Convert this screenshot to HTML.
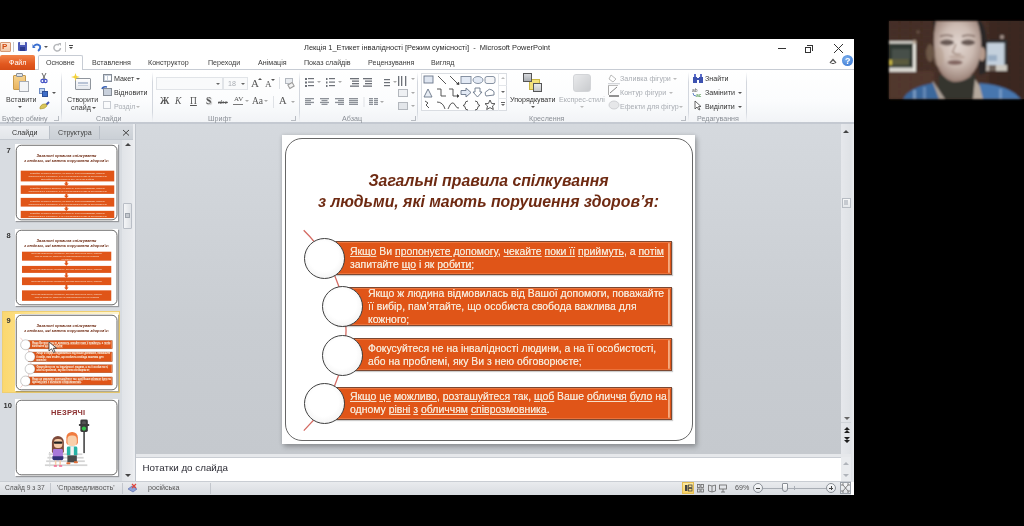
<!DOCTYPE html>
<html><head><meta charset="utf-8">
<style>
*{margin:0;padding:0;box-sizing:border-box}
html,body{width:1024px;height:526px;overflow:hidden;background:#000}
body{position:relative;font-family:"Liberation Sans",sans-serif;color:#333}
.a{position:absolute}
.t{position:absolute;white-space:nowrap;line-height:1}
.u{position:absolute;white-space:nowrap;line-height:1;font-size:8px;transform:scaleX(.89);transform-origin:0 0;color:#3b3b3b}
.g{color:#a9adb3}
.sep{position:absolute;width:1px;background:linear-gradient(rgba(205,210,218,0),#d3d7de 20%,#d3d7de 80%,rgba(205,210,218,0))}
.arr{position:absolute;width:0;height:0;border-left:2px solid transparent;border-right:2px solid transparent;border-top:2px solid #555}
svg{position:absolute;overflow:visible}
i{font-style:normal;text-decoration:underline solid rgba(248,214,180,.32);text-decoration-thickness:1px;text-underline-offset:.6px}
</style></head><body>

<div class="a" style="left:0;top:0;width:1024px;height:526px;filter:blur(0.35px)"><!-- window base -->
<div class="a" style="left:0;top:39px;width:854px;height:456px;background:#fff"></div>

<!-- ===== TITLE BAR ===== -->
<!-- PowerPoint icon -->
<div class="a" style="left:0;top:42px;width:11px;height:10px;background:linear-gradient(#fbe3d2,#f3c8a8);border:1px solid #d59a76;border-radius:1px"></div>
<div class="t" style="left:2px;top:43px;font-size:8px;font-weight:bold;color:#d24b10">P</div>
<div class="a" style="left:13px;top:42px;width:1px;height:10px;background:#c8c8c8"></div>
<!-- save -->
<div class="a" style="left:18px;top:42px;width:9px;height:9px;background:#4b59b7;border-radius:1px"></div>
<div class="a" style="left:20px;top:42px;width:5px;height:3px;background:#e9ecf6"></div>
<div class="a" style="left:20px;top:47px;width:5px;height:4px;background:#2c3a8e"></div>
<!-- undo -->
<svg style="left:32px;top:42px" width="10" height="10"><path d="M2 4 Q5 1 8 4 Q9 7 6 9" stroke="#3a6fd0" stroke-width="1.8" fill="none"/><path d="M0.5 2 L3.5 6 L0.5 6 Z" fill="#3a6fd0"/></svg>
<div class="arr" style="left:44px;top:46px"></div>
<!-- redo -->
<svg style="left:53px;top:42px" width="9" height="10"><path d="M6 3 A3.3 3.3 0 1 0 7.5 6" stroke="#b5b7ba" stroke-width="1.5" fill="none"/><path d="M5 1 L8 1 L8 4 Z" fill="#b5b7ba"/></svg>
<div class="a" style="left:65px;top:42px;width:1px;height:10px;background:#c8c8c8"></div>
<div class="a" style="left:69px;top:45px;width:4px;height:1px;background:#444"></div>
<div class="arr" style="left:69px;top:47px;border-top-color:#444"></div>

<div class="t" style="left:304px;top:44px;font-size:8px;transform:scaleX(.93);transform-origin:0 0;color:#2b2b2b">Лекція 1_Етикет інвалідності [Режим сумісності]&nbsp; - &nbsp;Microsoft PowerPoint</div>

<!-- window controls -->
<div class="a" style="left:778px;top:48px;width:8px;height:1px;background:#333"></div>
<div class="a" style="left:807px;top:45px;width:6px;height:6px;border-top:1px solid #333;border-right:1px solid #333"></div>
<div class="a" style="left:805px;top:47px;width:6px;height:6px;border:1px solid #333;background:#fff"></div>
<svg style="left:834px;top:44px" width="9" height="9"><path d="M0 0 L9 9 M9 0 L0 9" stroke="#333" stroke-width="1"/></svg>

<!-- ===== TABS ===== -->
<div class="a" style="left:0;top:69px;width:854px;height:1px;background:#c7ccd4"></div>
<div class="a" style="left:0;top:55px;width:35px;height:15px;background:linear-gradient(#f3844a,#e2581f 60%,#d54c17);border-radius:2px 2px 0 0"></div>
<div class="u" style="left:9px;top:59px;color:#fff">Файл</div>
<div class="a" style="left:38px;top:55px;width:45px;height:15px;background:#fff;border:1px solid #c7ccd4;border-bottom:none;border-radius:2px 2px 0 0"></div>
<div class="u" style="left:46px;top:59px">Основне</div>
<div class="u" style="left:92px;top:59px">Вставлення</div>
<div class="u" style="left:148px;top:59px">Конструктор</div>
<div class="u" style="left:208px;top:59px">Переходи</div>
<div class="u" style="left:258px;top:59px">Анімація</div>
<div class="u" style="left:304px;top:59px">Показ слайдів</div>
<div class="u" style="left:368px;top:59px">Рецензування</div>
<div class="u" style="left:431px;top:59px">Вигляд</div>
<!-- minimize ribbon / help -->
<svg style="left:829px;top:58px" width="8" height="6"><path d="M1 5 L4 1.5 L7 5" stroke="#555" stroke-width="1.2" fill="none"/><path d="M2.5 5.5 L5.5 5.5" stroke="#555" stroke-width="1"/></svg>
<div class="a" style="left:842px;top:55px;width:11px;height:11px;border-radius:50%;background:radial-gradient(circle at 40% 35%,#7fb2ee,#2f6fcf)"></div>
<div class="t" style="left:845px;top:57px;font-size:9px;font-weight:bold;color:#fff">?</div>

<!-- ===== RIBBON ===== -->
<div class="a" style="left:0;top:70px;width:854px;height:53px;background:linear-gradient(#ffffff,#fbfcfd 60%,#f1f3f6)"></div>
<div class="a" style="left:0;top:122px;width:854px;height:2px;background:#c4c9d1"></div>

<!-- group separators -->
<div class="sep" style="left:61px;top:72px;height:50px"></div>
<div class="sep" style="left:152px;top:72px;height:50px"></div>
<div class="sep" style="left:299px;top:72px;height:50px"></div>
<div class="sep" style="left:417px;top:72px;height:50px"></div>
<div class="sep" style="left:688px;top:72px;height:50px"></div>
<div class="sep" style="left:746px;top:72px;height:50px"></div>

<!-- group labels -->
<div class="u" style="left:2px;top:115px;color:#8a8f96">Буфер обміну</div>
<div class="u" style="left:96px;top:115px;color:#8a8f96">Слайди</div>
<div class="u" style="left:208px;top:115px;color:#8a8f96">Шрифт</div>
<div class="u" style="left:342px;top:115px;color:#8a8f96">Абзац</div>
<div class="u" style="left:529px;top:115px;color:#8a8f96">Креслення</div>
<div class="u" style="left:697px;top:115px;color:#8a8f96">Редагування</div>
<!-- launchers -->
<div class="a" style="left:54px;top:116px;width:5px;height:5px;border:1px solid #b8bcc2;border-left:none;border-top:none"></div>
<div class="a" style="left:291px;top:116px;width:5px;height:5px;border:1px solid #b8bcc2;border-left:none;border-top:none"></div>
<div class="a" style="left:411px;top:116px;width:5px;height:5px;border:1px solid #b8bcc2;border-left:none;border-top:none"></div>
<div class="a" style="left:681px;top:116px;width:5px;height:5px;border:1px solid #b8bcc2;border-left:none;border-top:none"></div>

<!-- Clipboard -->
<div class="a" style="left:13px;top:75px;width:13px;height:15px;background:linear-gradient(#f7d38f,#e9b45e);border:1px solid #c79a4c;border-radius:1px"></div>
<div class="a" style="left:16px;top:73px;width:7px;height:4px;background:#dfe3e8;border:1px solid #8b9096;border-radius:1px"></div>
<div class="a" style="left:19px;top:81px;width:10px;height:11px;background:#f4f5f7;border:1px solid #a9adb4"></div>
<div class="u" style="left:6px;top:96px">Вставити</div>
<div class="arr" style="left:18px;top:106px"></div>
<svg style="left:40px;top:73px" width="8" height="10"><path d="M2 0 L5 6 M6 0 L3 6" stroke="#666" stroke-width="1"/><circle cx="2.5" cy="8" r="1.6" stroke="#4654c6" stroke-width="1.2" fill="none"/><circle cx="5.5" cy="8" r="1.6" stroke="#4654c6" stroke-width="1.2" fill="none"/></svg>
<div class="a" style="left:39px;top:88px;width:6px;height:6px;background:#c4d6f1;border:1px solid #6d8cc4"></div>
<div class="a" style="left:42px;top:91px;width:6px;height:6px;background:#3f6fc9;border:1px solid #2d4f96"></div>
<div class="arr" style="left:52px;top:92px"></div>
<svg style="left:39px;top:101px" width="11" height="9"><path d="M7 4 L10 1" stroke="#4757b5" stroke-width="2"/><path d="M1 6 Q3 2 7 3 L8 5 Q6 8 1 8 Z" fill="#d8c45a" stroke="#a89530" stroke-width=".6"/></svg>

<!-- Slides group -->
<div class="a" style="left:75px;top:78px;width:16px;height:12px;background:linear-gradient(#fdfdfe,#e6e9ee);border:1px solid #8f959d;border-radius:1px"></div>
<div class="a" style="left:78px;top:82px;width:10px;height:2px;background:#b9c4d6"></div>
<div class="a" style="left:78px;top:85px;width:10px;height:1px;background:#c8d0dc"></div>
<svg style="left:71px;top:73px" width="9" height="8"><path d="M4.5 0 L5.5 3 L9 4 L5.5 5 L4.5 8 L3.5 5 L0 4 L3.5 3 Z" fill="#f4d23a"/></svg>
<div class="u" style="left:67px;top:96px">Створити</div>
<div class="u" style="left:71px;top:104px">слайд</div>
<div class="arr" style="left:92px;top:107px"></div>

<div class="a" style="left:103px;top:74px;width:9px;height:8px;background:#c8d0dc;border:1px solid #858c96"></div>
<div class="a" style="left:105px;top:76px;width:2px;height:4px;background:#fff"></div>
<div class="a" style="left:108px;top:76px;width:3px;height:4px;background:#fff"></div>
<div class="u" style="left:114px;top:75px;color:#333">Макет</div>
<div class="arr" style="left:136px;top:78px"></div>
<div class="a" style="left:103px;top:88px;width:9px;height:8px;background:#c8d0dc;border:1px solid #858c96"></div>
<svg style="left:101px;top:85px" width="7" height="5"><path d="M1 4 Q2 1 6 2" stroke="#3b63b5" stroke-width="1.5" fill="none"/></svg>
<div class="u" style="left:114px;top:89px;color:#333">Відновити</div>
<div class="a" style="left:103px;top:101px;width:8px;height:8px;border:1px solid #c9cdd3"></div>
<div class="u g" style="left:114px;top:103px">Розділ</div>
<div class="arr" style="left:136px;top:106px;border-top-color:#bbb"></div>

<!-- Font group -->
<div class="a" style="left:156px;top:77px;width:67px;height:13px;background:#f9fafb;border:1px solid #e1e4e8"></div>
<div class="arr" style="left:216px;top:83px;border-top-color:#666"></div>
<div class="a" style="left:223px;top:77px;width:25px;height:13px;background:#f9fafb;border:1px solid #e1e4e8"></div>
<div class="u g" style="left:228px;top:80px">18</div>
<div class="arr" style="left:241px;top:83px;border-top-color:#666"></div>
<div class="t" style="left:251px;top:78px;font-family:'Liberation Serif';font-size:11px;color:#555">A</div>
<div class="arr" style="left:258px;top:78px;border-top:none;border-bottom:2px solid #555"></div>
<div class="t" style="left:265px;top:80px;font-family:'Liberation Serif';font-size:9px;color:#555">A</div>
<div class="arr" style="left:271px;top:79px"></div>
<div class="a" style="left:279px;top:77px;width:1px;height:12px;background:#dfe2e6"></div>
<div class="a" style="left:285px;top:78px;width:8px;height:6px;background:#e9ecf0;border:1px solid #b3b8bf"></div>
<div class="a" style="left:288px;top:83px;width:6px;height:5px;background:#f3f3f3;border:1px solid #999;transform:rotate(-30deg)"></div>

<div class="t" style="left:160px;top:97px;font-family:'Liberation Serif';font-weight:bold;font-size:9.5px;color:#555">Ж</div>
<div class="t" style="left:175px;top:97px;font-family:'Liberation Serif';font-style:italic;font-size:9.5px;color:#555">К</div>
<div class="t" style="left:190px;top:97px;font-family:'Liberation Serif';font-size:9.5px;color:#555;text-decoration:underline">П</div>
<div class="t" style="left:206px;top:97px;font-family:'Liberation Serif';font-weight:bold;font-size:9.5px;color:#555;text-shadow:1px 1px 1px #aaa">S</div>
<div class="t" style="left:218px;top:99px;font-family:'Liberation Serif';font-size:7px;color:#555;text-decoration:line-through">abe</div>
<div class="t" style="left:234px;top:96px;font-family:'Liberation Serif';font-size:7px;color:#555">AV</div>
<div class="a" style="left:233px;top:104px;width:10px;height:1px;background:#777"></div>
<div class="arr" style="left:245px;top:100px;border-top-color:#aaa"></div>
<div class="t" style="left:252px;top:97px;font-family:'Liberation Serif';font-size:9.5px;color:#555">Aa</div>
<div class="arr" style="left:264px;top:100px;border-top-color:#aaa"></div>
<div class="a" style="left:273px;top:96px;width:1px;height:12px;background:#dfe2e6"></div>
<div class="t" style="left:279px;top:96px;font-family:'Liberation Serif';font-size:10.5px;color:#555">A</div>
<div class="arr" style="left:291px;top:101px;border-top-color:#aaa"></div>

<!-- Paragraph group -->
<svg style="left:305px;top:78px" width="120" height="30">
 <g fill="#6d7178">
  <rect x="0" y="0" width="2" height="2"/><rect x="3" y="0" width="6" height="1.2"/>
  <rect x="0" y="3.5" width="2" height="2"/><rect x="3" y="3.5" width="6" height="1.2"/>
  <rect x="0" y="7" width="2" height="2"/><rect x="3" y="7" width="6" height="1.2"/>
  <rect x="21" y="0" width="1.5" height="2"/><rect x="24" y="0" width="6" height="1.2"/>
  <rect x="21" y="3.5" width="1.5" height="2"/><rect x="24" y="3.5" width="6" height="1.2"/>
  <rect x="21" y="7" width="1.5" height="2"/><rect x="24" y="7" width="6" height="1.2"/>
  <rect x="45" y="0" width="9" height="1.3"/><rect x="47" y="2.5" width="7" height="1.3"/><rect x="47" y="5" width="7" height="1.3"/><rect x="45" y="7.5" width="9" height="1.3"/>
  <rect x="58" y="0" width="9" height="1.3"/><rect x="60" y="2.5" width="7" height="1.3"/><rect x="60" y="5" width="7" height="1.3"/><rect x="58" y="7.5" width="9" height="1.3"/>
  <rect x="79" y="1" width="6" height="1.2"/><rect x="79" y="4" width="6" height="1.2"/><rect x="79" y="7" width="6" height="1.2"/>
  <rect x="93" y="-2" width="1.3" height="10"/><rect x="96" y="-2" width="1.3" height="10"/><rect x="100" y="-2" width="1.3" height="10"/>
 </g>
 <g fill="#8d9198">
<rect x="0" y="20.0" width="9" height="1.3"/>
<rect x="15" y="20.0" width="9" height="1.3"/>
<rect x="30" y="20.0" width="9" height="1.3"/>
<rect x="44" y="20.0" width="9" height="1.3"/>
<rect x="64" y="20.0" width="4" height="1.3"/><rect x="69" y="20.0" width="4" height="1.3"/>
<rect x="0" y="21.9" width="6" height="1.3"/>
<rect x="16.5" y="21.9" width="6" height="1.3"/>
<rect x="33" y="21.9" width="6" height="1.3"/>
<rect x="44" y="21.9" width="9" height="1.3"/>
<rect x="64" y="21.9" width="4" height="1.3"/><rect x="69" y="21.9" width="4" height="1.3"/>
<rect x="0" y="23.8" width="9" height="1.3"/>
<rect x="15" y="23.8" width="9" height="1.3"/>
<rect x="30" y="23.8" width="9" height="1.3"/>
<rect x="44" y="23.8" width="9" height="1.3"/>
<rect x="64" y="23.8" width="4" height="1.3"/><rect x="69" y="23.8" width="4" height="1.3"/>
<rect x="0" y="25.7" width="6" height="1.3"/>
<rect x="16.5" y="25.7" width="6" height="1.3"/>
<rect x="33" y="25.7" width="6" height="1.3"/>
<rect x="44" y="25.7" width="9" height="1.3"/>
<rect x="64" y="25.7" width="4" height="1.3"/><rect x="69" y="25.7" width="4" height="1.3"/>
 </g>
 <rect x="58.5" y="19" width="1" height="10" fill="#dfe2e6"/>
</svg>
<div class="arr" style="left:317px;top:81px;border-top-color:#aaa"></div>
<div class="arr" style="left:338px;top:81px;border-top-color:#aaa"></div>
<div class="arr" style="left:393px;top:81px;border-top-color:#aaa"></div>
<div class="arr" style="left:380px;top:101px;border-top-color:#aaa"></div>
<div class="arr" style="left:411px;top:78px;border-top-color:#aaa"></div>
<div class="a" style="left:398px;top:89px;width:10px;height:8px;border:1px solid #b3b7bd;background:#eef0f3"></div>
<div class="arr" style="left:411px;top:92px;border-top-color:#aaa"></div>
<div class="a" style="left:398px;top:102px;width:10px;height:8px;border:1px solid #b3b7bd;background:#e3e6ea"></div>
<div class="arr" style="left:411px;top:105px;border-top-color:#aaa"></div>

<!-- Shapes gallery -->
<div class="a" style="left:421px;top:73px;width:86px;height:38px;background:#fff;border:1px solid #dadde2"></div>
<div class="a" style="left:498px;top:73px;width:1px;height:38px;background:#e3e6ea"></div>
<div class="a" style="left:499px;top:85px;width:8px;height:1px;background:#e3e6ea"></div>
<div class="a" style="left:499px;top:98px;width:8px;height:1px;background:#e3e6ea"></div>
<div class="arr" style="left:501px;top:77px;border-top:none;border-bottom:2px solid #bbb"></div>
<div class="arr" style="left:501px;top:91px;border-top-color:#666"></div>
<div class="arr" style="left:501px;top:104px;border-top-color:#666"></div>
<div class="a" style="left:501px;top:102px;width:4px;height:1px;background:#666"></div>
<svg style="left:423px;top:75px" width="76" height="36">
 <g stroke="#444" stroke-width=".9" fill="none">
  <rect x="1" y="1" width="9" height="7" fill="#dfe6f1" stroke="#6a7689"/>
  <path d="M15 1 L23 9"/>
  <path d="M27 1 L35 9"/><path d="M33.5 9 L36 9.5 L35.5 7" fill="#333"/>
  <rect x="38" y="1.5" width="10" height="7" fill="#e3eaf5" stroke="#7b8799"/>
  <ellipse cx="55" cy="5" rx="5" ry="3.5" fill="#e3eaf5" stroke="#7b8799"/>
  <rect x="62" y="1.5" width="10" height="7" rx="2" fill="#f4f5f7" stroke="#7b8799"/>
  <path d="M1 22 L5 14 L9 22 Z" fill="#e8edf4" stroke="#6a7689"/>
  <path d="M14 14 L18 14 L18 21 L23 21"/>
  <path d="M26 14 L30 14 L30 21 L35 21"/><path d="M34 19.5 L36 21 L34 22.5" fill="#333"/>
  <path d="M38 15.5 L43 15.5 L43 13 L48 17.5 L43 22 L43 19.5 L38 19.5 Z" fill="#e3eaf5" stroke="#6a7689"/>
  <path d="M52 13 L57 13 L57 17 L59 17 L54.5 22 L50 17 L52 17 Z" fill="#fff" stroke="#6a7689"/>
  <path d="M63 21 Q61 17 64 16 Q66 13 69 15 Q72 16 71 20 Z" fill="#fff" stroke="#6a7689"/>
  <path d="M2 26 L5 28 L3 30 L6 33"/>
  <path d="M14 27 Q20 27 22 34"/>
  <path d="M25 34 Q29 24 32 30 Q34 34 36 33"/>
  <path d="M45 26 Q42 26 42 29 Q42 30 40 30.5 Q42 31 42 32 Q42 35 45 35"/>
  <path d="M52 26 Q55 26 55 29 Q55 30 57 30.5 Q55 31 55 32 Q55 35 52 35"/>
  <path d="M67 25 L68.6 28.5 L72 28.7 L69.5 31 L70.3 34.5 L67 32.6 L63.7 34.5 L64.5 31 L62 28.7 L65.4 28.5 Z"/>
 </g>
</svg>

<!-- Arrange / Express styles -->
<div class="a" style="left:529px;top:79px;width:11px;height:11px;background:#f3e07a;border:1px solid #c9b544"></div>
<div class="a" style="left:523px;top:73px;width:9px;height:9px;background:linear-gradient(#d8dadd,#a9adb2);border:1px solid #555"></div>
<div class="a" style="left:533px;top:83px;width:9px;height:9px;background:linear-gradient(#e8e9eb,#c4c7cb);border:1px solid #555"></div>
<div class="u" style="left:510px;top:96px;color:#333">Упорядкувати</div>
<div class="arr" style="left:531px;top:106px"></div>
<div class="a" style="left:573px;top:74px;width:18px;height:18px;border-radius:3px;background:linear-gradient(135deg,#e9eaec,#c9cbce);border:1px solid #d3d5d8"></div>
<div class="u g" style="left:559px;top:96px">Експрес-стилі</div>
<div class="arr" style="left:580px;top:106px;border-top-color:#bbb"></div>
<svg style="left:608px;top:73px" width="12" height="38">
 <path d="M3 2 L8 6 L5 9 L1 6 Z" fill="none" stroke="#aaa" stroke-width=".8"/><rect x="0" y="10" width="12" height="1.3" fill="#d3d6da"/>
 <path d="M1 23 L11 23" stroke="#6e6e6e" stroke-width="1.5"/><path d="M2 20 L9 14" stroke="#888" stroke-width="1"/><rect x="0" y="12" width="1" height="10" fill="#aaa"/><rect x="0" y="12" width="10" height="1" fill="#bbb"/>
 <ellipse cx="6" cy="32" rx="5" ry="4" fill="#e6e7e9" stroke="#c6c8cb" stroke-width=".8"/>
</svg>
<div class="u g" style="left:620px;top:75px">Заливка фігури</div>
<div class="arr" style="left:673px;top:78px;border-top-color:#bbb"></div>
<div class="u g" style="left:620px;top:89px">Контур фігури</div>
<div class="arr" style="left:669px;top:92px;border-top-color:#bbb"></div>
<div class="u g" style="left:620px;top:103px">Ефекти для фігур</div>
<div class="arr" style="left:679px;top:106px;border-top-color:#bbb"></div>

<!-- Editing group -->
<svg style="left:693px;top:74px" width="11" height="9"><rect x="0" y="3" width="4" height="6" fill="#3d52b0"/><rect x="6" y="3" width="4" height="6" fill="#3d52b0"/><rect x="3" y="4" width="4" height="2" fill="#3d52b0"/><rect x="1" y="0" width="2" height="3" fill="#5a6cc8"/><rect x="7" y="0" width="2" height="3" fill="#5a6cc8"/></svg>
<div class="u" style="left:705px;top:75px;color:#333">Знайти</div>
<svg style="left:692px;top:87px" width="12" height="10"><text x="0" y="5" font-size="5" fill="#555" font-family="Liberation Sans">ab</text><text x="4" y="10" font-size="5" fill="#3b8a3b" font-family="Liberation Sans">ac</text><path d="M1 6 Q1 9 4 9" stroke="#3b63b5" stroke-width=".8" fill="none"/></svg>
<div class="u" style="left:705px;top:89px;color:#333">Замінити</div>
<div class="arr" style="left:738px;top:92px"></div>
<svg style="left:694px;top:101px" width="9" height="10"><path d="M1 0 L1 8 L3 6 L5 9 L6 8.5 L4.5 5.5 L7 5.5 Z" fill="#fff" stroke="#444" stroke-width=".8"/></svg>
<div class="u" style="left:705px;top:103px;color:#333">Виділити</div>
<div class="arr" style="left:738px;top:106px"></div>

<!-- ===== LEFT PANE ===== -->
<div class="a" style="left:0;top:124px;width:137px;height:358px;background:#d8dce1"></div>
<!-- pane tabs -->
<div class="a" style="left:0;top:126px;width:133px;height:13px;background:linear-gradient(#d5d9de,#cbd0d6)"></div>
<div class="a" style="left:0;top:126px;width:49px;height:13px;background:linear-gradient(#eceef1,#e2e5e9)"></div>
<div class="u" style="left:12px;top:128.5px;color:#333">Слайди</div>
<div class="a" style="left:49px;top:126px;width:1px;height:13px;background:#b9bfc7"></div>
<div class="u" style="left:58px;top:128.5px;color:#444">Структура</div>
<div class="a" style="left:99px;top:126px;width:1px;height:13px;background:#b9bfc7"></div>
<div class="a" style="left:0;top:139px;width:133px;height:1px;background:#c3c8cf"></div>
<svg style="left:123px;top:130px" width="6" height="5.5"><path d="M0 0 L6 5.5 M6 0 L0 5.5" stroke="#444" stroke-width="1"/></svg>
<div class="a" style="left:133px;top:124px;width:2px;height:358px;background:#eceef1"></div>
<div class="a" style="left:135px;top:124px;width:2px;height:358px;background:#d5d9de"></div>
<!-- pane scrollbar -->
<div class="a" style="left:122px;top:140px;width:11px;height:342px;background:linear-gradient(90deg,#e1e4e8,#e9ebee)"></div>
<div class="arr" style="left:124.5px;top:143px;border-left-width:3px;border-right-width:3px;border-top:none;border-bottom:3px solid #444"></div>
<div class="a" style="left:123px;top:203px;width:9px;height:26px;background:linear-gradient(90deg,#f4f5f7,#dfe2e6);border:1px solid #b9bec6;border-radius:1px"></div>
<div class="a" style="left:125px;top:213px;width:5px;height:5px;background:#c4c8ce;border:1px solid #9da3ab"></div>
<div class="arr" style="left:124.5px;top:474px;border-left-width:3px;border-right-width:3px;border-top:3px solid #444"></div>

<!-- selected highlight -->
<div class="a" style="left:2px;top:311px;width:118px;height:82px;background:linear-gradient(90deg,#fbd86f,#fde7a0 35%,#fdf1c6 80%,#fdf4d2);border:1px solid #efcf72"></div>

<!-- numbers -->
<div class="t" style="left:6.5px;top:146.5px;font-size:7.5px;font-weight:bold;color:#333">7</div>
<div class="t" style="left:6.5px;top:231.5px;font-size:7.5px;font-weight:bold;color:#333">8</div>
<div class="t" style="left:6.5px;top:316.5px;font-size:7.5px;font-weight:bold;color:#333">9</div>
<div class="t" style="left:3.5px;top:401.5px;font-size:7.5px;font-weight:bold;color:#333">10</div>
<div class="a" style="left:14.5px;top:143.5px;width:103.0px;height:77.06295399515739px;background:#fff;box-shadow:1px 1px 1px rgba(0,0,0,.3)"></div><div class="a" style="left:14.5px;top:143.5px;width:413px;height:309px;transform:scale(0.24939467312348668);transform-origin:0 0;overflow:hidden"><div class="a" style="left:3.3px;top:3.3px;width:407.5px;height:302.5px;border:4px solid #666;border-radius:22px"></div>
<div class="t" style="left:0;top:34.5px;width:413px;text-align:center;font-size:15.8px;font-weight:bold;font-style:italic;color:#6e2a12;line-height:21.5px">Загальні правила спілкування<br>з людьми, які мають порушення здоров’я:</div>
<div class="a" style="left:23px;top:107px;width:375px;height:43px;background:#e05518"></div>
<div class="t" style="left:23px;top:110.5px;width:375px;text-align:center;font-size:9.5px;line-height:12px;color:#f6e4d2">Уникайте жестів та звертань, які можуть бути образливими, говоріть<br>безпосередньо з людиною, а не з її супроводжуючим чи перекладачем<br>звертайтеся до людини на ім’я, якщо ви знайомі</div>
<div class="a" style="left:23px;top:166px;width:375px;height:34px;background:#e05518"></div>
<div class="t" style="left:23px;top:171.0px;width:375px;text-align:center;font-size:9.5px;line-height:12px;color:#f6e4d2">Уникайте жестів та звертань, які можуть бути образливими, говоріть<br>безпосередньо з людиною, а не з її супроводжуючим чи перекладачем</div>
<div class="a" style="left:23px;top:216px;width:375px;height:35px;background:#e05518"></div>
<div class="t" style="left:23px;top:221.5px;width:375px;text-align:center;font-size:9.5px;line-height:12px;color:#f6e4d2">Уникайте жестів та звертань, які можуть бути образливими, говоріть<br>безпосередньо з людиною, а не з її супроводжуючим чи перекладачем</div>
<div class="a" style="left:23px;top:268px;width:375px;height:29px;background:#e05518"></div>
<div class="t" style="left:23px;top:270.5px;width:375px;text-align:center;font-size:9.5px;line-height:12px;color:#f6e4d2">Уникайте жестів та звертань, які можуть бути образливими, говоріть<br>безпосередньо з людиною, а не з її супроводжуючим чи перекладачем</div>
<svg style="left:196px;top:150px" width="20" height="18"><path d="M6 0 L14 0 L14 8 L20 8 L10 18 L0 8 L6 8 Z" fill="#e05518"/></svg>
<svg style="left:196px;top:200px" width="20" height="18"><path d="M6 0 L14 0 L14 8 L20 8 L10 18 L0 8 L6 8 Z" fill="#e05518"/></svg>
<svg style="left:196px;top:251px" width="20" height="18"><path d="M6 0 L14 0 L14 8 L20 8 L10 18 L0 8 L6 8 Z" fill="#e05518"/></svg></div>
<div class="a" style="left:14.5px;top:228.9px;width:103.0px;height:77.06295399515739px;background:#fff;box-shadow:1px 1px 1px rgba(0,0,0,.3)"></div><div class="a" style="left:14.5px;top:228.9px;width:413px;height:309px;transform:scale(0.24939467312348668);transform-origin:0 0;overflow:hidden"><div class="a" style="left:3.3px;top:3.3px;width:407.5px;height:302.5px;border:4px solid #666;border-radius:22px"></div>
<div class="t" style="left:0;top:34.5px;width:413px;text-align:center;font-size:15.8px;font-weight:bold;font-style:italic;color:#6e2a12;line-height:21.5px">Загальні правила спілкування<br>з людьми, які мають порушення здоров’я:</div>
<div class="a" style="left:28px;top:91px;width:358px;height:36px;background:#e05518"></div>
<div class="t" style="left:28px;top:92.5px;width:358px;text-align:center;font-size:9px;line-height:11px;color:#f6e4d2">Якщо Ви спілкуєтеся з людиною, яка має порушення слуху, говоріть<br>чітко та повільно, дивіться на співрозмовника під час розмови<br>не кричіть</div>
<div class="a" style="left:28px;top:148px;width:358px;height:28px;background:#e05518"></div>
<div class="t" style="left:28px;top:156.5px;width:358px;text-align:center;font-size:9px;line-height:11px;color:#f6e4d2">Якщо Ви спілкуєтеся з людиною, яка має порушення слуху, говоріть</div>
<div class="a" style="left:28px;top:194px;width:358px;height:31px;background:#e05518"></div>
<div class="t" style="left:28px;top:204.0px;width:358px;text-align:center;font-size:9px;line-height:11px;color:#f6e4d2">Якщо Ви спілкуєтеся з людиною, яка має порушення слуху, говоріть</div>
<div class="a" style="left:28px;top:246px;width:358px;height:42px;background:#e05518"></div>
<div class="t" style="left:28px;top:256.0px;width:358px;text-align:center;font-size:9px;line-height:11px;color:#f6e4d2">Якщо Ви спілкуєтеся з людиною, яка має порушення слуху, говоріть<br>чітко та повільно, дивіться на співрозмовника під час розмови</div>
<svg style="left:197px;top:127px" width="18" height="20"><path d="M5 0 L13 0 L13 10 L18 10 L9 20 L0 10 L5 10 Z" fill="#e05518"/></svg>
<svg style="left:197px;top:176px" width="18" height="20"><path d="M5 0 L13 0 L13 10 L18 10 L9 20 L0 10 L5 10 Z" fill="#e05518"/></svg>
<svg style="left:197px;top:225px" width="18" height="20"><path d="M5 0 L13 0 L13 10 L18 10 L9 20 L0 10 L5 10 Z" fill="#e05518"/></svg></div>
<div class="a" style="left:14.5px;top:313.6px;width:103.0px;height:77.06295399515739px;background:#fff;box-shadow:1px 1px 1px rgba(0,0,0,.3)"></div><div class="a" style="left:14.5px;top:313.6px;width:413px;height:309px;transform:scale(0.24939467312348668);transform-origin:0 0;overflow:hidden"><div class="a" style="left:3.3px;top:3.3px;width:407.5px;height:302.5px;border:4px solid #666;border-radius:22px"></div>
<div class="t" style="left:0;top:34.5px;width:413px;text-align:center;font-size:15.8px;font-weight:bold;font-style:italic;color:#6e2a12;line-height:21.5px">Загальні правила спілкування<br>з людьми, які мають порушення здоров’я:</div>
<svg style="left:0;top:0" width="413" height="309"><path d="M21.7 95.3 A139.7 139.7 0 0 1 21.8 295.6" stroke="#d46a62" stroke-width="1.3" fill="none"/></svg>
<div class="a" style="left:38px;top:106px;width:352px;height:33.5px;background:#e05518;border:1px solid rgba(105,70,55,.85);box-shadow:inset 0 1px 0 rgba(250,150,100,.55),inset 0 -1px 0 rgba(250,150,100,.45),1px 1px 1px rgba(0,0,0,.2)"></div>
<div class="a" style="left:386px;top:108px;width:2.2px;height:29.5px;background:linear-gradient(90deg,#f7b088,#f39a66);border-radius:1px"></div>
<div class="a" style="left:54px;top:151.7px;width:336px;height:39.8px;background:#e05518;border:1px solid rgba(105,70,55,.85);box-shadow:inset 0 1px 0 rgba(250,150,100,.55),inset 0 -1px 0 rgba(250,150,100,.45),1px 1px 1px rgba(0,0,0,.2)"></div>
<div class="a" style="left:386px;top:153.7px;width:2.2px;height:35.8px;background:linear-gradient(90deg,#f7b088,#f39a66);border-radius:1px"></div>
<div class="a" style="left:54px;top:203.2px;width:336px;height:33px;background:#e05518;border:1px solid rgba(105,70,55,.85);box-shadow:inset 0 1px 0 rgba(250,150,100,.55),inset 0 -1px 0 rgba(250,150,100,.45),1px 1px 1px rgba(0,0,0,.2)"></div>
<div class="a" style="left:386px;top:205.2px;width:2.2px;height:29px;background:linear-gradient(90deg,#f7b088,#f39a66);border-radius:1px"></div>
<div class="a" style="left:38px;top:252px;width:352px;height:33.2px;background:#e05518;border:1px solid rgba(105,70,55,.85);box-shadow:inset 0 1px 0 rgba(250,150,100,.55),inset 0 -1px 0 rgba(250,150,100,.45),1px 1px 1px rgba(0,0,0,.2)"></div>
<div class="a" style="left:386px;top:254px;width:2.2px;height:29.200000000000003px;background:linear-gradient(90deg,#f7b088,#f39a66);border-radius:1px"></div>
<div class="a" style="left:21.5px;top:102.5px;width:41px;height:41px;border-radius:50%;background:radial-gradient(circle at 48% 45%,#fff 50%,#f2f2f2 80%,#dcdcdc);border:1.8px solid #404040"></div>
<div class="a" style="left:40px;top:151px;width:41px;height:41px;border-radius:50%;background:radial-gradient(circle at 48% 45%,#fff 50%,#f2f2f2 80%,#dcdcdc);border:1.8px solid #404040"></div>
<div class="a" style="left:40px;top:199.5px;width:41px;height:41px;border-radius:50%;background:radial-gradient(circle at 48% 45%,#fff 50%,#f2f2f2 80%,#dcdcdc);border:1.8px solid #404040"></div>
<div class="a" style="left:21.5px;top:247.5px;width:41px;height:41px;border-radius:50%;background:radial-gradient(circle at 48% 45%,#fff 50%,#f2f2f2 80%,#dcdcdc);border:1.8px solid #404040"></div>
<div class="t" style="left:68px;top:111px;font-size:10.45px;color:#f6e4d2;text-shadow:0 0 .1px #f6e4d2;line-height:12.8px"><i>Якщо</i> Ви <i>пропонуєте допомогу</i>, <i>чекайте</i> <i>поки її</i> <i>приймуть</i>, а <i>потім</i><br>запитайте <i>що</i> і як <i>робити</i>;</div>
<div class="t" style="left:86px;top:152.2px;font-size:10.45px;color:#f6e4d2;text-shadow:0 0 .1px #f6e4d2;line-height:13.1px">Якщо ж людина відмовилась від Вашої допомоги, поважайте<br>її вибір, пам’ятайте, що особиста свобода важлива для<br>кожного;</div>
<div class="t" style="left:86px;top:208px;font-size:10.45px;color:#f6e4d2;text-shadow:0 0 .1px #f6e4d2;line-height:12.6px">Фокусуйтеся не на інвалідності людини, а на її особистості,<br>або на проблемі, яку Ви з нею обговорюєте;</div>
<div class="t" style="left:68px;top:255.3px;font-size:10.45px;color:#f6e4d2;text-shadow:0 0 .1px #f6e4d2;line-height:13.1px"><i>Якщо</i> <i>це</i> <i>можливо</i>, <i>розташуйтеся</i> так, <i>щоб</i> Ваше <i>обличчя</i> <i>було</i> на<br>одному <i>рівні</i> <i>з</i> <i>обличчям</i> <i>співрозмовника</i>.</div></div>
<div class="a" style="left:14.5px;top:398.9px;width:103.0px;height:77.06295399515739px;background:#fff;box-shadow:1px 1px 1px rgba(0,0,0,.3)"></div><div class="a" style="left:14.5px;top:398.9px;width:413px;height:309px;transform:scale(0.24939467312348668);transform-origin:0 0;overflow:hidden"><div class="a" style="left:3.3px;top:3.3px;width:407.5px;height:302.5px;border:4px solid #666;border-radius:22px"></div>
<div class="t" style="left:0;top:41px;width:413px;text-align:center;font-size:30px;font-weight:bold;color:#8c2f2f;letter-spacing:1px;padding-left:14px">НЕЗРЯЧІ</div>
<div class="a" style="left:135px;top:218px;width:135px;height:7px;background:#d4d4d4"></div>
<div class="a" style="left:130px;top:232px;width:145px;height:7px;background:#d4d4d4"></div>
<div class="a" style="left:125px;top:246px;width:155px;height:7px;background:#d4d4d4"></div>
<div class="a" style="left:120px;top:262px;width:170px;height:7px;background:#d4d4d4"></div>
<div class="a" style="left:262px;top:82px;width:30px;height:50px;background:#3a3a3a;border-radius:6px"></div>
<div class="a" style="left:268px;top:88px;width:17px;height:17px;background:#555;border-radius:50%"></div>
<div class="a" style="left:268px;top:110px;width:17px;height:17px;background:#35c24a;border-radius:50%"></div>
<div class="a" style="left:274px;top:132px;width:6px;height:85px;background:#3a3a3a"></div>
<div class="a" style="left:256px;top:100px;width:42px;height:8px;background:#3a3a3a;border-radius:3px"></div>
<div class="a" style="left:148px;top:148px;width:48px;height:70px;background:#7e4a3a;border-radius:24px 24px 8px 8px"></div>
<div class="a" style="left:156px;top:160px;width:34px;height:36px;background:#f6cba8;border-radius:14px"></div>
<div class="a" style="left:156px;top:170px;width:34px;height:9px;background:#222;border-radius:4px"></div>
<div class="a" style="left:152px;top:200px;width:40px;height:34px;background:#a879da;border-radius:6px 6px 0 0"></div>
<div class="a" style="left:150px;top:230px;width:44px;height:16px;background:#33337a;border-radius:0 0 8px 8px"></div>
<div class="a" style="left:160px;top:246px;width:6px;height:22px;background:#f6cba8"></div>
<div class="a" style="left:178px;top:246px;width:6px;height:22px;background:#f6cba8"></div>
<div class="a" style="left:155px;top:266px;width:14px;height:6px;background:#f06292;border-radius:3px"></div>
<div class="a" style="left:176px;top:266px;width:14px;height:6px;background:#f06292;border-radius:3px"></div>
<div class="a" style="left:138px;top:215px;width:3px;height:55px;background:#eee;border:1px solid #bbb"></div>
<div class="a" style="left:206px;top:132px;width:46px;height:52px;background:#f07b3f;border-radius:22px 22px 10px 10px"></div>
<div class="a" style="left:210px;top:146px;width:38px;height:42px;background:#f8d0ac;border-radius:16px"></div>
<div class="a" style="left:208px;top:190px;width:42px;height:36px;background:#26b3a6;border-radius:6px 6px 0 0"></div>
<div class="a" style="left:222px;top:190px;width:14px;height:36px;background:#f3f3f3"></div>
<div class="a" style="left:210px;top:226px;width:38px;height:28px;background:#4a4a4a"></div>
<div class="a" style="left:206px;top:254px;width:16px;height:8px;background:#e2713a;border-radius:3px"></div>
<div class="a" style="left:236px;top:250px;width:16px;height:8px;background:#e2713a;border-radius:3px"></div></div>
<svg style="left:48px;top:341px" width="10" height="13"><path d="M1 1 L1 10 L3.5 7.8 L5.5 11.5 L7 10.8 L5.2 7.2 L8.5 7.2 Z" fill="#fff" stroke="#333" stroke-width=".8"/></svg>
<!-- ===== MAIN AREA ===== -->
<div class="a" style="left:136px;top:124px;width:718px;height:330px;background:linear-gradient(#d5d9de,#c9cdd2 60%,#c5c9ce)"></div>
<div class="a" style="left:841px;top:124px;width:13px;height:358px;background:linear-gradient(90deg,#e6e8ec,#dfe2e6 75%,#e9ebee)"></div>
<div class="arr" style="left:843px;top:130px;border-left-width:3px;border-right-width:3px;border-top:none;border-bottom:3px solid #444"></div>
<div class="a" style="left:841.5px;top:197.5px;width:9px;height:10px;background:linear-gradient(#f6f7f8,#e4e7ea);border:1px solid #b7bcc3"></div>
<div class="a" style="left:844px;top:200px;width:4px;height:5px;background:#c6cad0"></div>
<div class="arr" style="left:843.5px;top:416.5px;border-left-width:3px;border-right-width:3px;border-top:3.5px solid #666"></div>
<div class="a" style="left:841px;top:422px;width:10px;height:1px;background:#d0d4d9"></div><svg style="left:843.5px;top:426.5px" width="6" height="16"><path d="M0 3 L3 0 L6 3 Z M0 6 L3 3 L6 6 Z" fill="#1e1e1e"/><path d="M0 10 L3 13 L6 10 Z M0 13 L3 16 L6 13 Z" fill="#1e1e1e"/></svg>
<div class="a" style="left:282px;top:135px;width:413px;height:309px;background:#fff;box-shadow:0 0 4px rgba(0,0,0,.12),2px 3px 5px rgba(0,0,0,.25)"></div><div class="a" style="left:282px;top:135px;width:413px;height:309px;transform:scale(1);transform-origin:0 0;overflow:hidden"><div class="a" style="left:3.3px;top:3.3px;width:407.5px;height:302.5px;border:1.5px solid #666;border-radius:17px"></div>
<div class="t" style="left:0;top:34.5px;width:413px;text-align:center;font-size:15.8px;font-weight:bold;font-style:italic;color:#6e2a12;line-height:21.5px">Загальні правила спілкування<br>з людьми, які мають порушення здоров’я:</div>
<svg style="left:0;top:0" width="413" height="309"><path d="M21.7 95.3 A139.7 139.7 0 0 1 21.8 295.6" stroke="#d46a62" stroke-width="1.3" fill="none"/></svg>
<div class="a" style="left:38px;top:106px;width:352px;height:33.5px;background:#e05518;border:1px solid rgba(105,70,55,.85);box-shadow:inset 0 1px 0 rgba(250,150,100,.55),inset 0 -1px 0 rgba(250,150,100,.45),1px 1px 1px rgba(0,0,0,.2)"></div>
<div class="a" style="left:386px;top:108px;width:2.2px;height:29.5px;background:linear-gradient(90deg,#f7b088,#f39a66);border-radius:1px"></div>
<div class="a" style="left:54px;top:151.7px;width:336px;height:39.8px;background:#e05518;border:1px solid rgba(105,70,55,.85);box-shadow:inset 0 1px 0 rgba(250,150,100,.55),inset 0 -1px 0 rgba(250,150,100,.45),1px 1px 1px rgba(0,0,0,.2)"></div>
<div class="a" style="left:386px;top:153.7px;width:2.2px;height:35.8px;background:linear-gradient(90deg,#f7b088,#f39a66);border-radius:1px"></div>
<div class="a" style="left:54px;top:203.2px;width:336px;height:33px;background:#e05518;border:1px solid rgba(105,70,55,.85);box-shadow:inset 0 1px 0 rgba(250,150,100,.55),inset 0 -1px 0 rgba(250,150,100,.45),1px 1px 1px rgba(0,0,0,.2)"></div>
<div class="a" style="left:386px;top:205.2px;width:2.2px;height:29px;background:linear-gradient(90deg,#f7b088,#f39a66);border-radius:1px"></div>
<div class="a" style="left:38px;top:252px;width:352px;height:33.2px;background:#e05518;border:1px solid rgba(105,70,55,.85);box-shadow:inset 0 1px 0 rgba(250,150,100,.55),inset 0 -1px 0 rgba(250,150,100,.45),1px 1px 1px rgba(0,0,0,.2)"></div>
<div class="a" style="left:386px;top:254px;width:2.2px;height:29.200000000000003px;background:linear-gradient(90deg,#f7b088,#f39a66);border-radius:1px"></div>
<div class="a" style="left:21.5px;top:102.5px;width:41px;height:41px;border-radius:50%;background:radial-gradient(circle at 48% 45%,#fff 50%,#f2f2f2 80%,#dcdcdc);border:1.8px solid #404040"></div>
<div class="a" style="left:40px;top:151px;width:41px;height:41px;border-radius:50%;background:radial-gradient(circle at 48% 45%,#fff 50%,#f2f2f2 80%,#dcdcdc);border:1.8px solid #404040"></div>
<div class="a" style="left:40px;top:199.5px;width:41px;height:41px;border-radius:50%;background:radial-gradient(circle at 48% 45%,#fff 50%,#f2f2f2 80%,#dcdcdc);border:1.8px solid #404040"></div>
<div class="a" style="left:21.5px;top:247.5px;width:41px;height:41px;border-radius:50%;background:radial-gradient(circle at 48% 45%,#fff 50%,#f2f2f2 80%,#dcdcdc);border:1.8px solid #404040"></div>
<div class="t" style="left:68px;top:111px;font-size:10.45px;color:#f6e4d2;text-shadow:0 0 .1px #f6e4d2;line-height:12.8px"><i>Якщо</i> Ви <i>пропонуєте допомогу</i>, <i>чекайте</i> <i>поки її</i> <i>приймуть</i>, а <i>потім</i><br>запитайте <i>що</i> і як <i>робити</i>;</div>
<div class="t" style="left:86px;top:152.2px;font-size:10.45px;color:#f6e4d2;text-shadow:0 0 .1px #f6e4d2;line-height:13.1px">Якщо ж людина відмовилась від Вашої допомоги, поважайте<br>її вибір, пам’ятайте, що особиста свобода важлива для<br>кожного;</div>
<div class="t" style="left:86px;top:208px;font-size:10.45px;color:#f6e4d2;text-shadow:0 0 .1px #f6e4d2;line-height:12.6px">Фокусуйтеся не на інвалідності людини, а на її особистості,<br>або на проблемі, яку Ви з нею обговорюєте;</div>
<div class="t" style="left:68px;top:255.3px;font-size:10.45px;color:#f6e4d2;text-shadow:0 0 .1px #f6e4d2;line-height:13.1px"><i>Якщо</i> <i>це</i> <i>можливо</i>, <i>розташуйтеся</i> так, <i>щоб</i> Ваше <i>обличчя</i> <i>було</i> на<br>одному <i>рівні</i> <i>з</i> <i>обличчям</i> <i>співрозмовника</i>.</div></div>
<!-- ===== NOTES ===== -->
<div class="a" style="left:136px;top:454px;width:715px;height:3px;background:#e6e8eb"></div>
<div class="a" style="left:136px;top:457px;width:705px;height:1px;background:#c9cdd3"></div>
<div class="a" style="left:136px;top:458px;width:705px;height:24px;background:#fff"></div>
<div class="a" style="left:135px;top:124px;width:1px;height:358px;background:#c0c5cc"></div>
<div class="a" style="left:841px;top:457px;width:10px;height:25px;background:#e9ebee"></div>
<div class="arr" style="left:843px;top:462px;border-left-width:3px;border-right-width:3px;border-top:none;border-bottom:3px solid #b0b4ba"></div>
<div class="arr" style="left:843px;top:474px;border-left-width:3px;border-right-width:3px;border-top:3px solid #b0b4ba"></div>
<div class="t" style="left:142.5px;top:462.5px;font-size:9.8px;color:#2a2a33">Нотатки до слайда</div>

<!-- ===== STATUS BAR ===== -->
<div class="a" style="left:0;top:482px;width:851px;height:13px;background:linear-gradient(#e9ebee,#d9dce1)"></div>
<div class="a" style="left:0;top:481px;width:851px;height:1px;background:#c9cdd3"></div>
<div class="u" style="left:5px;top:484px;color:#555;transform:scaleX(.83)">Слайд 9 з 37</div>
<div class="a" style="left:50px;top:483px;width:1px;height:11px;background:#c3c7cd"></div>
<div class="u" style="left:57px;top:484px;color:#555">'Справедливость'</div>
<div class="a" style="left:122px;top:483px;width:1px;height:11px;background:#c3c7cd"></div>
<svg style="left:127px;top:483px" width="11" height="10"><path d="M1 6 L5 3 L10 6 L6 9 Z" fill="#8ea3d8" stroke="#5063a8" stroke-width=".6"/><path d="M5 1 L9 5 M9 1 L5 5" stroke="#e0443a" stroke-width="1.2"/></svg>
<div class="u" style="left:148px;top:484px;color:#555">російська</div>
<div class="a" style="left:210px;top:483px;width:1px;height:11px;background:#c3c7cd"></div>

<div class="a" style="left:682px;top:482px;width:12px;height:12px;background:linear-gradient(#fde9a0,#f8d263);border:1px solid #e4bd52"></div>
<svg style="left:685px;top:485px" width="7" height="6"><rect x="0" y="0" width="2.5" height="6" fill="#444"/><rect x="3.5" y="0" width="3.5" height="2.5" fill="none" stroke="#444" stroke-width=".8"/><rect x="3.5" y="3.5" width="3.5" height="2.5" fill="none" stroke="#444" stroke-width=".8"/></svg>
<svg style="left:697px;top:484px" width="32" height="9">
 <g fill="none" stroke="#666" stroke-width=".8"><rect x=".5" y=".5" width="2.5" height="3"/><rect x="4" y=".5" width="2.5" height="3"/><rect x=".5" y="5" width="2.5" height="3"/><rect x="4" y="5" width="2.5" height="3"/>
 <path d="M11.5 1 L15 2 L15 8 L11.5 7 Z M15 2 L18.5 1 L18.5 7 L15 8"/>
 <rect x="22.5" y="1" width="7" height="4"/><path d="M26 5 L26 8 M24 8 L28 8"/></g>
</svg>
<div class="u" style="left:735px;top:484px;color:#555">69%</div>
<div class="a" style="left:753px;top:483px;width:10px;height:10px;border-radius:50%;border:1px solid #8a8f96;background:linear-gradient(#fafbfc,#e2e5e9)"></div>
<div class="a" style="left:756px;top:487.5px;width:4px;height:1px;background:#444"></div>
<div class="a" style="left:763px;top:488px;width:63px;height:1px;background:#a9aeb5"></div>
<div class="a" style="left:794px;top:486px;width:1px;height:4px;background:#a9aeb5"></div>
<div class="a" style="left:782px;top:483px;width:6px;height:9px;background:linear-gradient(#fff,#dde0e4);border:1px solid #8a8f96;border-radius:1px 1px 3px 3px"></div>
<div class="a" style="left:826px;top:483px;width:10px;height:10px;border-radius:50%;border:1px solid #8a8f96;background:linear-gradient(#fafbfc,#e2e5e9)"></div>
<div class="a" style="left:829px;top:487.5px;width:4px;height:1px;background:#444"></div>
<div class="a" style="left:830.5px;top:486px;width:1px;height:4px;background:#444"></div>
<div class="a" style="left:840px;top:482px;width:11px;height:12px;background:linear-gradient(#f5f6f8,#dfe2e6);border:1px solid #9aa0a8"></div>
<svg style="left:842px;top:484px" width="7" height="8"><path d="M0 0 L2 0 M0 0 L0 2 M7 0 L5 0 M7 0 L7 2 M0 8 L2 8 M0 8 L0 6 M7 8 L5 8 M7 8 L7 6 M1 1 L6 7 M6 1 L1 7" stroke="#666" stroke-width=".8"/></svg>

<!-- ===== WEBCAM ===== -->
<svg style="left:889px;top:21px" width="135" height="78" viewBox="0 0 135 78">
 <defs>
  <filter id="bl" x="-10%" y="-10%" width="120%" height="120%"><feGaussianBlur stdDeviation="1.2"/></filter>
  <radialGradient id="face" cx="50%" cy="40%" r="60%"><stop offset="0" stop-color="#e2d6d0"/><stop offset=".55" stop-color="#cdbcb3"/><stop offset="1" stop-color="#9a8278"/></radialGradient>
  <pattern id="brick" width="11" height="7" patternUnits="userSpaceOnUse"><rect width="11" height="7" fill="#3c2820"/><rect x="0" y="0" width="10" height="3" fill="#4e352b"/><rect x="5.5" y="3.5" width="10" height="3" fill="#4e352b"/><rect x="-5" y="3.5" width="10" height="3" fill="#4e352b"/></pattern>
 </defs>
 <rect width="135" height="78" fill="#3a271f"/>
 <g filter="url(#bl)">
  <rect width="135" height="78" fill="url(#brick)" opacity=".6"/>
  <rect x="0" y="50" width="45" height="28" fill="#6a4a40" opacity=".35"/>
  <rect x="100" y="0" width="35" height="78" fill="#2e1f19" opacity=".45"/>
  <!-- left picture -->
  <rect x="0" y="20" width="27" height="31" fill="#d8d6cf"/>
  <rect x="0" y="22.5" width="24" height="24" fill="#2f3830"/>
  <rect x="3" y="28" width="18" height="10" fill="#465048"/>
  <rect x="0" y="38" width="20" height="6" fill="#5a5a3e"/>
  <rect x="0" y="39" width="3" height="5" fill="#c8b840"/>
  <rect x="24.5" y="23" width="2" height="27" fill="#eeede6"/>
  <circle cx="25.5" cy="21" r="2" fill="#b8a898"/>
  <circle cx="29" cy="11" r="1.5" fill="#8c7466" opacity=".6"/>
  <!-- right picture -->
  <rect x="93" y="19" width="25" height="27" fill="#2e3034"/>
  <rect x="95.5" y="22" width="20" height="22" fill="#c4d0dc"/>
  <rect x="99" y="34" width="9" height="6" fill="#9aaec4"/>
  <rect x="90" y="44" width="10" height="6" fill="#c0b8b0"/>
  <rect x="100" y="44" width="7" height="6" fill="#6e625a"/>
  <rect x="107" y="44" width="11" height="6" fill="#cdc9c1"/>
  <circle cx="113" cy="16" r="2" fill="#a89890"/>
  <!-- hair right -->
  <path d="M78 0 L92 0 Q99 10 98 30 L97 52 L90 54 L88 25 Q86 8 78 0 Z" fill="#2c2826"/>
  <path d="M44 0 L50 0 L46 14 Z" fill="#2c2826"/>
  <!-- turtleneck -->
  <path d="M50 54 L86 54 L88 78 L48 78 Z" fill="#36352f"/>
  <!-- collar -->
  <path d="M44 60 L56 78 L38 78 Z" fill="#a89e94"/>
  <path d="M86 58 L100 78 L84 78 Z" fill="#b4a89c"/>
  <!-- shirt -->
  <path d="M14 78 Q20 66 44 62 L50 78 Z" fill="#3a679c"/>
  <path d="M90 62 Q120 64 132 78 L94 78 Z" fill="#4676ae"/>
  <rect x="24" y="69" width="3" height="9" fill="#9ab4d6" opacity=".6"/>
  <rect x="34" y="66" width="3" height="12" fill="#8aa6cc" opacity=".5"/>
  <rect x="110" y="68" width="3" height="10" fill="#9ab4d6" opacity=".5"/>
  <!-- ear -->
  <ellipse cx="93" cy="33" rx="3.5" ry="7" fill="#b49a8c"/>
  <!-- face -->
  <path d="M47 0 L88 0 Q93 12 92 30 Q90 48 80 56 Q72 62 63 60 Q52 56 48 44 Q44 28 45 12 Z" fill="url(#face)"/>
  <ellipse cx="50" cy="36" rx="5" ry="10" fill="#b6a090" opacity=".5"/>
  <!-- features -->
  <ellipse cx="58" cy="21.5" rx="7" ry="3" fill="#4e3e3a" opacity=".8"/>
  <ellipse cx="79" cy="21.5" rx="7" ry="3" fill="#4e3e3a" opacity=".8"/>
  <path d="M51 15.5 Q58 13 64 15.5 M73 15.5 Q79 13 86 15.5" stroke="#7a645c" stroke-width="1.4" fill="none"/>
  <path d="M67 23 L63.5 31 Q67 34.5 72 33" stroke="#9a8276" stroke-width="1.3" fill="none"/>
  <ellipse cx="68" cy="36" rx="8" ry="2" fill="#b09a8e" opacity=".6"/>
  <ellipse cx="66" cy="41.5" rx="7.5" ry="2.4" fill="#7a5c58" opacity=".9"/>
  <path d="M50 44 Q58 58 66 59 Q76 58 84 50 L82 56 Q72 62 63 61 Q54 58 50 48 Z" fill="#9c8276" opacity=".55"/>
  <ellipse cx="41" cy="32" rx="4" ry="9" fill="#a08a70" opacity=".45"/>
 </g>
</svg>
</div>
</body></html>
